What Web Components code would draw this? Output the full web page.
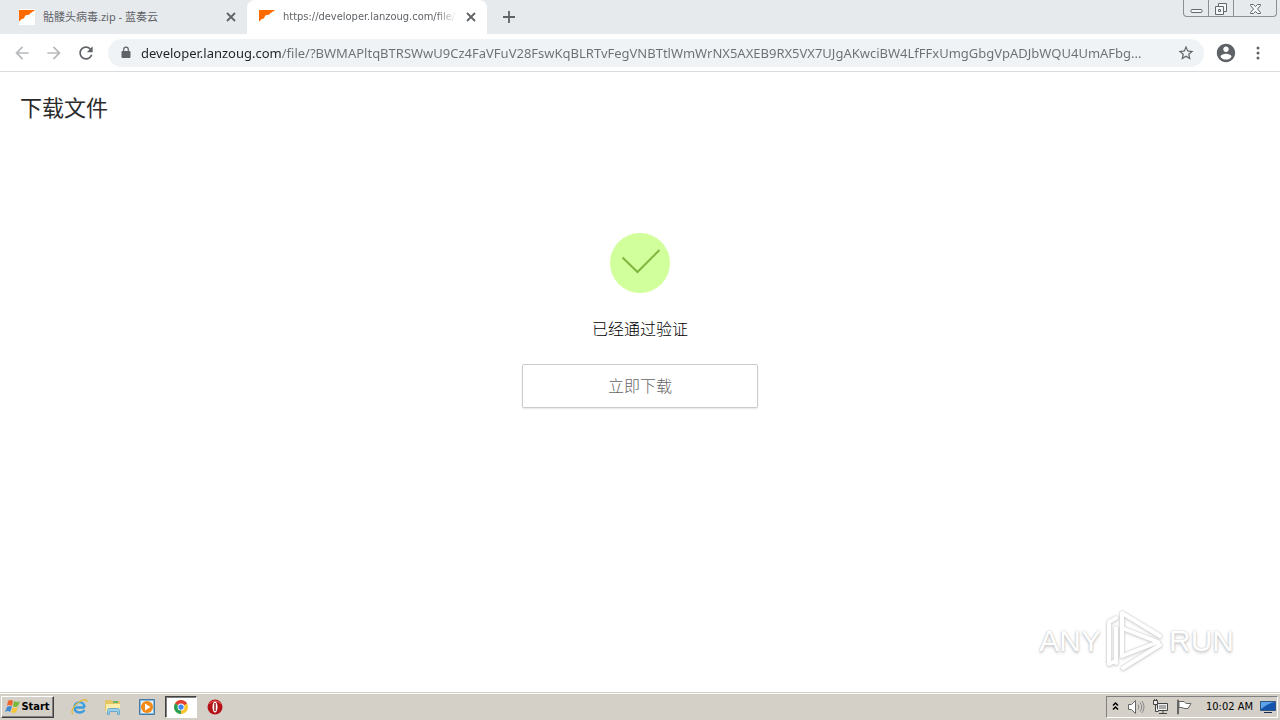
<!DOCTYPE html>
<html lang="zh-CN">
<head>
<meta charset="utf-8">
<title>下载文件</title>
<style>
  html, body { margin: 0; height: 100%; }
  body { font-family: "Noto Sans", "Noto Sans CJK SC", sans-serif; background: #fff; }
</style>
</head>
<body>
<desktop-screen></desktop-screen>
<script>
const define = (name, html) => {
  const template = document.createElement('template');
  template.innerHTML = html;
  customElements.define(name, class extends HTMLElement {
    constructor() {
      super();
      this.attachShadow({ mode: 'open' }).append(template.content.cloneNode(true));
    }
  });
};

define('browser-tab', `
<style>
  :host { display: flex; align-items: center; box-sizing: border-box; width: 240px; height: 34px; padding: 0 10px 0 12px; color: #5f6368; font-size: 11px; }
  :host([active]) { background: #fff; border-radius: 8px 8px 0 0; }
  .icon { width: 16px; height: 16px; flex: none; margin-right: 8px; }
  .title { flex: 1; min-width: 0; overflow: hidden; white-space: nowrap; line-height: 18px; }
  :host([active]) .title { -webkit-mask-image: linear-gradient(90deg, #000 88%, transparent); font-family: "DejaVu Sans Condensed", "DejaVu Sans", sans-serif; }
  button { flex: none; width: 12px; height: 12px; padding: 0; border: 0; background: none; margin-left: 8px; display: grid; place-items: center; color: #5f6368; }
</style>
<svg class="icon" viewBox="0 0 16 16"><path fill="#fff" d="M0 0h16v16H0z"/><path fill="#ff6a00" d="M0 1h16c-1 .5-1 1.500-2 1.500-1 0-1.500 1.500-2.500 1.500-1 1-1 2-3 2-1 0-2 0-2.500 1-.5 1-1 3-3 3-1 0-1.500 1.500-3 2.500z"/></svg>
<span class="title"><slot></slot></span>
<button aria-label="Close tab"><svg width="10" height="10" viewBox="0 0 10 10"><path d="M1 1l8 8M9 1L1 9" stroke="currentColor" stroke-width="1.800"/></svg></button>
`);

define('window-controls', `
<style>
  :host { display: flex; height: 17px; box-sizing: border-box; border: 1px solid #8b9095; border-top: 0; border-radius: 0 0 4px 4px; color: #63686d; }
  button { padding: 0; border: 0; background: none; width: 24px; display: grid; place-items: center; color: inherit; }
  button + button { border-left: 1px solid #8b9095; width: 25px; }
  button:last-child { width: 43px; }
  svg { fill: #f5f6f7; stroke: currentColor; display: block; }
</style>
<button aria-label="Minimize"><svg width="13" height="15" viewBox="0 0 13 15"><rect x="1" y="8.500" width="11" height="3" rx="1"/></svg></button>
<button aria-label="Restore"><svg width="14" height="15" viewBox="0 0 14 15"><path d="M4.500 2.500h8v8h-8z"/><path d="M1.500 5.500h8v8h-8zM4.500 8.500h2v2h-2z"/></svg></button>
<button aria-label="Close"><svg width="13" height="15" viewBox="0 0 13 15"><path d="M1.500 3.500h3l2 2 2-2h3v1l-3 3.500 3 3.500v1h-3l-2-2-2 2h-3v-1l3-3.500-3-3.500z"/></svg></button>
`);

define('tab-strip', `
<style>
  :host { display: flex; height: 34px; background: #e7eaed; padding: 0 3px 0 7px; }
  .new { width: 28px; height: 34px; padding: 0; border: 0; background: none; margin-left: 8px; color: #5f6368; display: grid; place-items: center; }
  .space { flex: 1; }
</style>
<browser-tab>骷髅头病毒.zip - 蓝奏云</browser-tab>
<browser-tab active>https://developer.lanzoug.com/file/?BWMAPltq</browser-tab>
<button class="new" aria-label="New tab"><svg width="12" height="12" viewBox="0 0 12 12"><path d="M6 0v12M0 6h12" stroke="currentColor" stroke-width="1.800"/></svg></button>
<span class="space"></span>
<window-controls></window-controls>
`);

define('address-bar', `
<style>
  :host { display: flex; align-items: center; height: 28px; border-radius: 14px; background: #f0f3f5; padding: 0 8px 0 12px; min-width: 0; color: #5f6368; }
  label { display: contents; }
  input { flex: 1; min-width: 0; height: 28px; padding: 0; margin: 0 10px 0 9px; border: 0; outline: 0; font: 13px/28px "Noto Sans", sans-serif; color: #5f6368;
    background: linear-gradient(90deg, #202124 141px, #6a6f74 141px); -webkit-background-clip: text; background-clip: text; -webkit-text-fill-color: transparent; text-overflow: ellipsis; }
  svg { flex: none; }
  button { padding: 0; border: 0; background: none; width: 20px; height: 20px; display: grid; place-items: center; color: inherit; }
</style>
<label for="url"><svg width="12" height="14" viewBox="0 0 12 14"><path fill="currentColor" d="M2.500 5h7q1 0 1 1v5q0 1-1 1h-7q-1 0-1-1V6q0-1 1-1z"/><path d="M3.700 5.500V3.500a2.300 2.300 0 014.600 0v2" fill="none" stroke="currentColor" stroke-width="1.200"/></svg></label>
<input id="url" type="text" aria-label="Address" spellcheck="false" value="developer.lanzoug.com/file/?BWMAPltqBTRSWwU9Cz4FaVFuV28FswKqBLRTvFegVNBTtlWmWrNX5AXEB9RX5VX7UJgAKwciBW4LfFFxUmgGbgVpADJbWQU4UmAFbg...">
<button aria-label="Bookmark this page"><svg width="18" height="18" viewBox="0 0 24 24"><path fill="currentColor" d="M22 9.240l-7.190-.62L12 2 9.190 8.630 2 9.240l5.460 4.730L5.820 21 12 17.270 18.180 21l-1.630-7.030L22 9.240zM12 15.400l-3.760 2.270 1-4.280-3.320-2.880 4.380-.38L12 6.100l1.710 4.040 4.380.38-3.320 2.880 1 4.280L12 15.400z"/></svg></button>
`);

define('browser-toolbar', `
<style>
  :host { display: flex; align-items: center; height: 37px; border-bottom: 1px solid #d9dcdf; background: #fff; padding: 0 10px; color: #5f6368; }
  button { padding: 0; border: 0; background: none; width: 24px; height: 24px; display: grid; place-items: center; color: inherit; flex: none; margin-right: 8px; }
  button[disabled] { color: #b7b9bc; }
  button:last-child { margin-right: 0; }
  address-bar { flex: 1; margin: 0 10px 0 2px; }
  svg { fill: currentColor; }
</style>
<button disabled aria-label="Back"><svg width="20" height="20" viewBox="0 0 24 24"><path d="M20 11H7.830l5.590-5.590L12 4l-8 8 8 8 1.410-1.410L7.830 13H20v-2z"/></svg></button>
<button disabled aria-label="Forward"><svg width="20" height="20" viewBox="0 0 24 24"><path d="M12 4l-1.410 1.410L16.170 11H4v2h12.170l-5.580 5.590L12 20l8-8z"/></svg></button>
<button aria-label="Reload"><svg width="20" height="20" viewBox="0 0 24 24"><path d="M17.650 6.350C16.200 4.900 14.210 4 12 4c-4.420 0-7.990 3.580-7.990 8s3.570 8 7.990 8c3.730 0 6.840-2.550 7.730-6h-2.080c-.82 2.330-3.040 4-5.650 4-3.310 0-6-2.690-6-6s2.690-6 6-6c1.660 0 3.140.69 4.220 1.780L13 11h7V4l-2.350 2.350z"/></svg></button>
<address-bar></address-bar>
<button aria-label="Profile"><svg width="22" height="22" viewBox="0 0 24 24"><path d="M12 2C6.480 2 2 6.480 2 12s4.480 10 10 10 10-4.480 10-10S17.520 2 12 2zm0 3c1.660 0 3 1.340 3 3s-1.340 3-3 3-3-1.340-3-3 1.340-3 3-3zm0 14.200c-2.500 0-4.710-1.280-6-3.220.03-1.990 4-3.080 6-3.080 1.990 0 5.970 1.090 6 3.080-1.290 1.940-3.500 3.220-6 3.220z"/></svg></button>
<button aria-label="Menu"><svg width="16" height="16" viewBox="0 0 16 16"><circle cx="8" cy="3" r="1.500"/><circle cx="8" cy="8" r="1.500"/><circle cx="8" cy="13" r="1.500"/></svg></button>
`);

define('verify-panel', `
<style>
  :host { display: flex; flex-direction: column; align-items: center; gap: 24px; }
  p { margin: 0; font-size: 16px; line-height: 23px; color: #000; font-weight: 300; }
  button { width: 236px; height: 44px; border: 1px solid #ccc; border-radius: 2px; background: #fff; box-shadow: 0 1px 2px #0000001a; padding: 0 0 2px; font: 300 16px/24px "Noto Sans CJK SC", sans-serif; color: #666; }
</style>
<svg width="60" height="60" viewBox="0 0 60 60"><circle cx="30" cy="30" r="30" fill="#d1ff9c"/><path d="M12.500 24.500L27.500 39 49.500 17" fill="none" stroke="#7eb53f" stroke-width="2"/></svg>
<p><slot></slot></p>
<button><slot name="action"></slot></button>
`);

define('any-run-mark', `
<style>
  :host { display: flex; align-items: center; gap: 4px; height: 66px; color: #fff; font: 30px/40px "Liberation Sans", sans-serif; text-shadow: 0 0 2px #bbb, 0 2px 3px #ccc; }
  svg { filter: drop-shadow(0 0 1px #c4c4c4) drop-shadow(0 1px 1px #ddd); }
</style>
<span>ANY</span>
<svg width="60" height="66" viewBox="0 0 60 66" fill="none" stroke="#fff" stroke-width="4" stroke-linejoin="round" stroke-linecap="round"><path d="M17 40V5l38 23M17 5M55 37L18 60M17 20l36 14-36 14z"/><path d="M11 10L4 14v42l6-3M11 20v35"/></svg>
<span>RUN</span>
`);

define('download-page', `
<style>
  :host { display: block; position: relative; flex: 1; min-height: 0; padding: 18px 20px; box-sizing: border-box; background: #fff; font-family: "Noto Sans CJK SC", sans-serif; }
  h1 { margin: 0 0 111px; font-size: 22px; line-height: 32px; font-weight: 400; color: #2b2b2b; }
  any-run-mark { position: absolute; right: 46px; bottom: 18px; }
</style>
<h1>下载文件</h1>
<verify-panel>已经通过验证<span slot="action">立即下载</span></verify-panel>
<any-run-mark></any-run-mark>
`);

define('system-tray', `
<style>
  :host { display: flex; align-items: center; box-sizing: border-box; height: 22px; padding: 0 1px 0 4px; border: 1px solid; border-color: #808080 #fff #fff #808080; color: #000; font: 11px/16px "DejaVu Sans Condensed", "DejaVu Sans", sans-serif; white-space: nowrap; }
  svg { flex: none; margin-right: 7px; }
  time { margin: 0 7px 0 6px; }
  svg:last-child { margin: 0; }
</style>
<svg width="9" height="12" viewBox="0 0 9 12" fill="none" stroke="#000" stroke-width="1.500"><path d="M2 4.500l2.500-2.500L7 4.500M2 8.500L4.500 6 7 8.500"/></svg>
<svg width="18" height="16" viewBox="0 0 18 16" fill="#fff" stroke="#666"><path d="M1.500 5.500h3l4-4v13l-4-4h-3z"/><path d="M11 5.500q2 2.500 0 5M13 3.500q3.500 4.500 0 9M15 2q4 6 0 12" fill="none" stroke="#888"/></svg>
<svg width="17" height="16" viewBox="0 0 17 16" fill="#eee" stroke="#444"><path d="M5.500 4.500h10v7h-10zM7 14.500h8M11 12v2"/><path d="M7 6h7v4H7z" fill="#aaa" stroke="none"/><path d="M1.500 1.500h4v4h-4zM3.500 5.500v7h3M2.500 0v2M4.500 0v2"/></svg>
<svg width="17" height="16" viewBox="0 0 17 16" fill="#fff" stroke="#666"><path d="M1.500 1v14h1V1z"/><path d="M3 2.500h5l2 2h5l-3 5H8l-2-1H3z"/></svg>
<time datetime="10:02">10:02 AM</time>
<svg width="16" height="16" viewBox="0 0 16 16"><path fill="#1554ad" stroke="#315783" d="M.500 2.500h15v9H.500z"/><path fill="#5da3e8" d="M1 3h14Q8 4 1 10z"/><path fill="#172d50" d="M4 13h8v1H4z"/></svg>
`);

define('task-bar', `
<style>
  :host { display: flex; align-items: center; box-sizing: border-box; height: 28px; flex: none; border-top: 1px solid #d4d0c8; box-shadow: inset 0 1px #fff; background: #d4d0c8; padding: 1px 2px 0 1px; color: #000; }
  button { display: grid; place-items: center; padding: 0; border: 0; background: none; height: 22px; width: 32px; margin-right: 2px; color: inherit; }
  .start { display: flex; align-items: center; justify-content: center; width: 53px; margin-right: 9px; border: 1px solid; border-color: #fff #404040 #404040 #fff; box-shadow: inset -1px -1px #808080; font: bold 11px/16px "DejaVu Sans Condensed", "DejaVu Sans", sans-serif; }
  .open { background: #fff; border: 1px solid; border-color: #404040 #fff #fff #404040; box-shadow: inset 1px 1px #808080; }
  .space { flex: 1; }
</style>
<button class="start"><svg width="16" height="16" viewBox="0 0 16 16"><path fill="#ef652c" d="M3 2q3-2 5 0L7 7Q4 5 2 7z"/><path fill="#78b93e" d="M9 2q3 2 6 0l-2 5q-3 2-5 0z"/><path fill="#438bd0" d="M2 8q3-2 5 0l-2 5q-2-2-5 0z"/><path fill="#f9c43a" d="M8 8q2 2 5 0l-2 5q-3 2-5 0z"/></svg>Start</button>
<button aria-label="Internet Explorer"><svg width="18" height="18" viewBox="0 0 18 18" fill="none"><path d="M14.500 9.500h-9M14.500 9.500q0-5-5-5t-5 5 5 5q3.500 0 5-2.500" stroke="#3b9bdc" stroke-width="2.400"/><path d="M5 9q3-6 8-2" stroke="#8ed5f7"/><path d="M3 16C0 14 4 7 9 4s8-3 8 0" stroke="#e3ba40" stroke-width="1.300"/></svg></button>
<button aria-label="Explorer"><svg width="18" height="18" viewBox="0 0 18 18"><path fill="#e5c464" d="M1 3l1-1h5l1 1h8v10H1z"/><path fill="#fbedaa" d="M2 6h14v8H2z"/><path fill="#68b768" d="M9 3h5v2H9z"/><path fill="#9bd0ea" stroke="#6ba9cf" d="M3.500 16.500v-4q0-2 2-2h8q2 0 2 2v4h-2v-3h-8v3z"/></svg></button>
<button aria-label="Media Player"><svg width="18" height="18" viewBox="0 0 18 18"><path fill="#8bb9db" stroke="#427ba6" d="M1.500 1.500h15v15h-15z"/><path fill="#e6f1f8" d="M3 3h12v12H3z"/><circle cx="9" cy="9" r="6" fill="#f28a13"/><path fill="#fff" d="M7 5.500L12.500 9 7 12.500z"/></svg></button>
<button class="open" aria-label="Chrome"><svg width="14" height="14" viewBox="0 0 16 16"><circle cx="8" cy="8" r="8" fill="#fbc52d"/><path fill="#df4035" d="M8 8L1.100 4a8 8 0 0113.800 0z"/><path fill="#269e56" d="M8 8l0 8A8 8 0 011.100 4z"/><circle cx="8" cy="8" r="4" fill="#fff"/><circle cx="8" cy="8" r="3" fill="#4285f4"/></svg></button>
<button aria-label="Opera"><svg width="16" height="16" viewBox="0 0 16 16"><circle cx="8" cy="8" r="7.500" fill="#b51218"/><path d="M2 5q6-6 12 0" stroke="#e65b5b" fill="none"/><ellipse cx="8" cy="8" rx="2.500" ry="5.500" fill="#fff"/><path fill="#8c090d" d="M7.300 4h1.400v8H7.300z"/></svg></button>
<span class="space"></span>
<system-tray></system-tray>
`);

define('desktop-screen', `
<style>:host { display: flex; flex-direction: column; min-height: 100vh; }</style>
<tab-strip></tab-strip>
<browser-toolbar></browser-toolbar>
<download-page></download-page>
<task-bar></task-bar>
`);
</script>
</body>
</html>
